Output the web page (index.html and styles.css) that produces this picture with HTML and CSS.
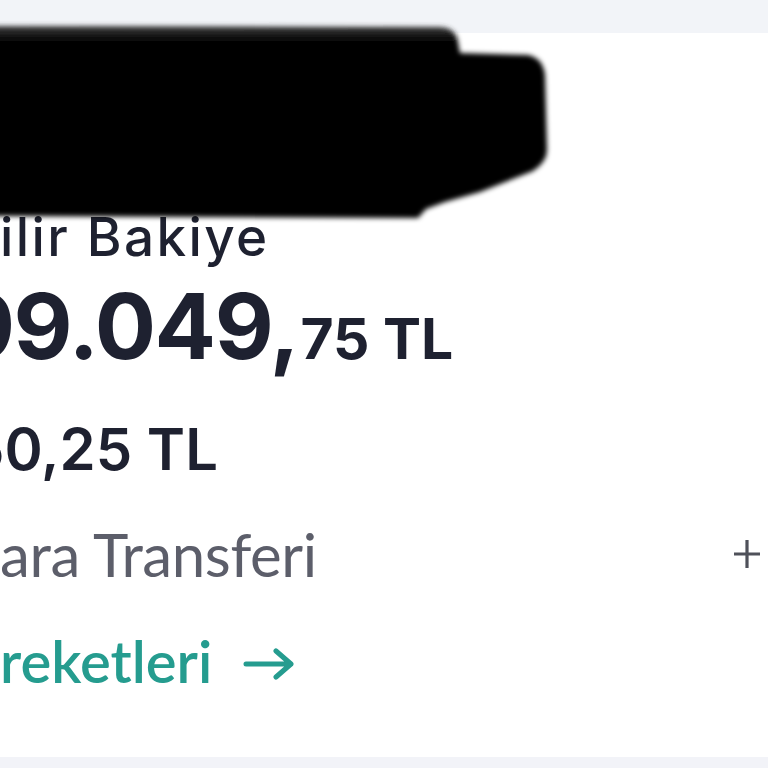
FILE: index.html
```html
<!DOCTYPE html>
<html lang="tr">
<head>
<meta charset="utf-8">
<title>Hesap</title>
<link rel="stylesheet" href="styles.css">
</head>
<body>
<div class="page">
  <div class="topband"></div>
  <main class="card">
    <div class="account-title"></div>
    <div class="label">ilir Bakiye</div>
    <div class="balance"><span class="main">99.049,</span><span class="cents">75 TL</span></div>
    <div class="sub">50,25 TL</div>
    <div class="action-row">
      <span class="action">ara Transferi</span>
      <svg class="plus" width="28" height="30" viewBox="0 0 28 30"><path d="M14 1V29M1 15H27" stroke="#4f515a" stroke-width="3.2" fill="none"/></svg>
    </div>
    <a class="link" href="#">reketleri
      <svg class="arrow" width="54" height="36" viewBox="0 0 54 36"><path d="M4 18H49M34 5L49 18L34 31" stroke="#259c8f" stroke-width="5" fill="none" stroke-linecap="round" stroke-linejoin="round"/></svg>
    </a>
  </main>
  <div class="bottomband"></div>
  <svg class="redaction" width="600" height="260" viewBox="0 0 600 260">
    <defs>
      <filter id="soft" x="-10%" y="-10%" width="120%" height="120%"><feGaussianBlur stdDeviation="2.6"/></filter>
      <linearGradient id="ink" x1="0" y1="0" x2="0" y2="1">
        <stop offset="0" stop-color="#3a3a3a"/>
        <stop offset="0.08" stop-color="#000"/>
        <stop offset="1" stop-color="#000"/>
      </linearGradient>
    </defs>
    <path filter="url(#soft)" fill="url(#ink)" d="M-20 26 L440 27 Q456 28 458 42 L460 53 L528 55 Q543 58 545 75 L547 150 Q547 162 533 171 L480 192 L445 202 L426 209 L418 218 L-20 216 Z"/>
  </svg>
</div>
</body>
</html>
```

FILE: styles.css
```css
html, body {
  margin: 0;
  padding: 0;
  background: #ffffff;
}
.page {
  position: relative;
  width: 768px;
  height: 768px;
  overflow: hidden;
  display: flex;
  flex-direction: column;
  font-family: "Lato", "Inter", sans-serif;
  color: #1e2130;
}
.topband {
  height: 33px;
  background: #f2f4f8;
  box-shadow: 0 3px 8px rgba(20, 30, 60, 0.05);
  flex: none;
}
.card {
  flex: 1;
  background: #fff;
  display: flex;
  flex-direction: column;
}
.account-title {
  height: 174px;
  flex: none;
}
.label {
  font-family: "Inter", sans-serif;
  font-size: 53px;
  font-weight: 500;
  letter-spacing: 2.4px;
  line-height: 60px;
  margin-left: 0;
  white-space: nowrap;
}
.balance {
  margin-top: 11px;
  display: flex;
  align-items: baseline;
  margin-left: -44px;
  white-space: nowrap;
  font-family: "Inter", sans-serif;
  font-weight: 700;
}
.balance .main {
  font-size: 91px;
  line-height: 96px;
  letter-spacing: -1.5px;
}
.balance .cents {
  font-size: 57px;
  line-height: 60px;
  margin-left: 2px;
}
.sub {
  margin-top: 40px;
  font-family: "Inter", sans-serif;
  font-weight: 600;
  font-size: 58px;
  line-height: 70px;
  margin-left: -32px;
  white-space: nowrap;
}
.action-row {
  margin-top: 35px;
  display: flex;
  align-items: center;
  justify-content: space-between;
  padding-right: 7px;
}
.action {
  font-size: 60px;
  font-weight: 400;
  letter-spacing: -0.4px;
  color: #5c5e6a;
  line-height: 70px;
  white-space: nowrap;
}
.plus {
  display: block;
}
.link {
  margin-top: 37px;
  display: flex;
  align-items: center;
  gap: 30px;
  font-size: 58px;
  font-weight: 600;
  line-height: 70px;
  color: #259c8f;
  text-decoration: none;
}
.arrow {
  display: block;
  margin-top: 6px;
}
.bottomband {
  height: 11px;
  background: #f2f3f8;
  flex: none;
}
.redaction {
  position: absolute;
  left: 0;
  top: 0;
}
```
